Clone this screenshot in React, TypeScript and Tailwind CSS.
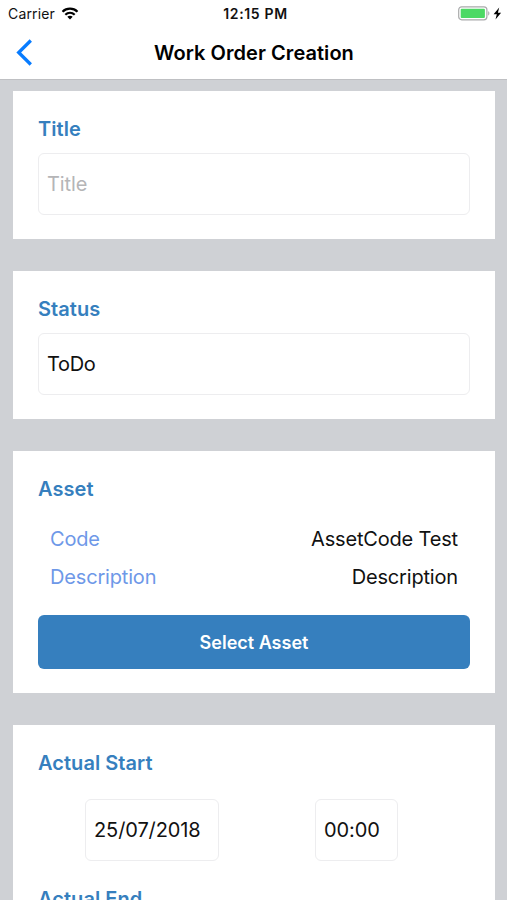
import type { ReactNode } from 'react';

function Card({ title, className = '', children }: { title: string; className?: string; children: ReactNode }) {
  return (
    <section className={`w-[482px] shrink-0 bg-white px-[25px] pt-[25px] ${className}`}>
      <h2 className="h-[25px] text-[20px] font-semibold leading-[26px] tracking-[0.05px] text-[#367fbe]">{title}</h2>
      {children}
    </section>
  );
}

function Field({ children, className = '' }: { children: ReactNode; className?: string }) {
  return (
    <div className={`flex h-[62px] items-center rounded-md border border-[#ededef] text-[20px] ${className}`}>
      {children}
    </div>
  );
}

function AssetRow({ label, value }: { label: string; value: string }) {
  return (
    <div className="flex h-[38px] items-center justify-between px-3 text-[20px] tracking-[-0.17px]">
      <span className="text-[#6e98e8]">{label}</span>
      <span>{value}</span>
    </div>
  );
}

function StatusBar() {
  return (
    <div className="grid h-[27px] grid-cols-3 items-center text-[14px] leading-[27px] text-[#111]">
      <div className="flex items-center gap-[6px] pl-2">
        <span className="tracking-[0.15px]">Carrier</span>
        <svg width="18" height="13" viewBox="0 0 17 13" fill="none" stroke="#000" strokeWidth="2.2">
          <path d="M1 4.7C5.2.7 11.8.7 16 4.7" />
          <path d="M3.8 7.7c2.7-2.5 6.7-2.5 9.4 0" />
          <path d="M8.5 12.4 5.8 9.8c1.5-1.4 3.9-1.4 5.4 0Z" fill="#000" stroke="none" />
        </svg>
      </div>
      <span className="pl-1 text-center font-semibold tracking-[0.65px]">12:15 PM</span>
      <div className="flex items-center justify-end pr-[5px]">
        <svg width="44" height="15" viewBox="0 0 44 15">
          <rect x=".7" y=".8" width="28.2" height="13" rx="3" fill="#fff" stroke="#a9aaab" strokeWidth="1.2" />
          <rect x="2.7" y="2.7" width="24.2" height="9.2" rx="1" fill="#4cd964" />
          <path d="M30.2 5.2c1.6.5 1.6 3.7 0 4.2Z" fill="#a9aaab" />
          <path d="m41.2 1.5-5.6 6.7h3.2l-1.3 5.2 5.6-6.7h-3.2Z" fill="#000" />
        </svg>
      </div>
    </div>
  );
}

export default function App() {
  return (
    <div className="flex h-[900px] w-[507px] flex-col overflow-hidden bg-[#cfd1d5] font-[Inter,sans-serif] text-[#111]">
      <header className="h-20 shrink-0 border-b border-[#bfc0c3] bg-white">
        <StatusBar />
        <div className="grid h-[51px] grid-cols-[60px_1fr_60px] items-center">
          <button aria-label="Back" className="pl-4">
            <svg width="17" height="27" viewBox="0 0 17 27" fill="none" stroke="#087cff" strokeWidth="3.3">
              <path d="M14.8 1.5 2.7 13.5l12.1 12" />
            </svg>
          </button>
          <h1 className="whitespace-nowrap pl-px text-center text-[20px] font-semibold tracking-[0.05px] text-black">
            Work Order Creation
          </h1>
        </div>
      </header>
      <main className="flex flex-col gap-8 pl-[13px] pt-[11px]">
        <Card title="Title" className="h-[148px]">
          <Field className="mt-3 px-2 tracking-[-0.1px] text-[#b5b5b7]">Title</Field>
        </Card>
        <Card title="Status" className="h-[148px]">
          <Field className="mt-3 px-2 tracking-[-0.3px]">ToDo</Field>
        </Card>
        <Card title="Asset" className="h-[242px]">
          <div className="mt-[19px]">
            <AssetRow label="Code" value="AssetCode Test" />
            <AssetRow label="Description" value="Description" />
          </div>
          <button className="mt-[19px] h-[54px] w-full rounded-md bg-[#367fbe] text-[18px] font-semibold text-white">
            Select Asset
          </button>
        </Card>
        <Card title="Actual Start" className="h-[200px]">
          <div className="mt-[24px] flex gap-24 pl-[47px]">
            <Field className="w-[134px] px-2 tracking-[-0.1px]">25/07/2018</Field>
            <Field className="w-[83px] px-2 tracking-[-0.1px]">00:00</Field>
          </div>
          <h2 className="mt-[25px] text-[20px] font-semibold leading-[26px] tracking-[0.05px] text-[#367fbe]">Actual End</h2>
        </Card>
      </main>
    </div>
  );
}
